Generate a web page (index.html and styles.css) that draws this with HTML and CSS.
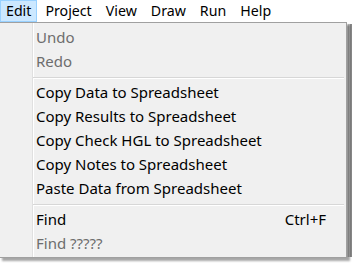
FILE: index.html
```html
<!DOCTYPE html>
<html lang="en">
<head>
    <meta charset="UTF-8">
    <meta name="viewport" content="width=device-width, initial-scale=1.0">
    <title>Edit menu</title>
    <link rel="stylesheet" href="styles.css">
</head>
<body>
    <!-- 菜单栏 -->
    <div class="menubar">
        <div class="menu active">Edit</div>
        <div class="menu">Project</div>
        <div class="menu">View</div>
        <div class="menu">Draw</div>
        <div class="menu">Run</div>
        <div class="menu">Help</div>
    </div>

    <!-- 下面窗口的滚动条 -->
    <div class="scroll-strip"></div>

    <!-- 弹出菜单 -->
    <div class="popup">
        <div class="item disabled">Undo</div>
        <div class="item disabled">Redo</div>
        <div class="sep"></div>
        <div class="item">Copy Data to Spreadsheet</div>
        <div class="item">Copy Results to Spreadsheet</div>
        <div class="item">Copy Check HGL to Spreadsheet</div>
        <div class="item">Copy Notes to Spreadsheet</div>
        <div class="item">Paste Data from Spreadsheet</div>
        <div class="sep"></div>
        <div class="item"><span>Find</span><span class="key">Ctrl+F</span></div>
        <div class="item disabled">Find ?????</div>
    </div>
</body>
</html>
```

FILE: styles.css
```css
body {
    margin: 0;
    background-color: #fff;
    font-family: "Noto Sans", "Open Sans", sans-serif;
    font-size: 15px;
    color: #000;
}

.menubar {
    display: flex;
    height: 22px;
    background-color: #fff;
    font-size: 14.2px;
}

.menu {
    box-sizing: border-box;
    height: 22px;
    line-height: 20px;
    padding: 0 5px;
    margin-right: 2px;
    border: 1px solid transparent;
}

.menu.active {
    background-color: #cce8ff;
    border-color: #99d1ff;
}

.scroll-strip {
    position: absolute;
    left: 347px;
    top: 24px;
    width: 5px;
    height: 233px;
    background: linear-gradient(to right, #e6e6e6 0, #e6e6e6 1px, #bdbdbd 1px, #bdbdbd 3px, #8a8a8a 3px);
}

.popup {
    position: absolute;
    left: -1px;
    top: 22px;
    width: 348px;
    height: 236px;
    padding: 3px 0 0;
    box-sizing: border-box;
    border: 1px solid #a0a0a0;
    /* 左侧图标栏的分隔线 */
    background: linear-gradient(to right, #f0f0f0 32px, #e0e0e0 32px, #e0e0e0 33px, #fff 33px, #fff 34px, #f0f0f0 34px);
    box-shadow: 3px 3px 2px rgba(0, 0, 0, 0.35);
}

.item {
    display: flex;
    justify-content: space-between;
    height: 24px;
    line-height: 23px;
    padding: 0 20px 0 36px;
    white-space: nowrap;
}

.item.disabled {
    color: #6d6d6d;
}

.sep {
    height: 1px;
    margin: 3px 2px 2px 33px;
    background-color: #d7d7d7;
    border-bottom: 1px solid #fff;
}
```
